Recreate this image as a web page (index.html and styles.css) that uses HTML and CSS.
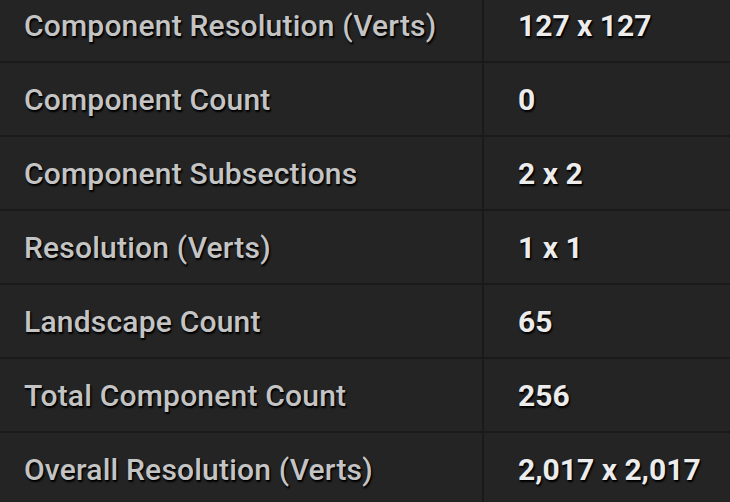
FILE: index.html
```html
<!DOCTYPE html>
<html>
<head>
<meta charset="utf-8">
<link rel="stylesheet" href="styles.css">
</head>
<body>
<div class="table">
  <div class="row"><div class="name">Component Resolution (Verts)</div><div class="value">127 x 127</div></div>
  <div class="row"><div class="name">Component Count</div><div class="value">0</div></div>
  <div class="row"><div class="name">Component Subsections</div><div class="value">2 x 2</div></div>
  <div class="row"><div class="name">Resolution (Verts)</div><div class="value">1 x 1</div></div>
  <div class="row"><div class="name">Landscape Count</div><div class="value">65</div></div>
  <div class="row"><div class="name">Total Component Count</div><div class="value">256</div></div>
  <div class="row"><div class="name">Overall Resolution (Verts)</div><div class="value">2,017 x 2,017</div></div>
</div>
</body>
</html>
```
FILE: styles.css
```css
html, body {
  margin: 0;
  padding: 0;
  background: #242424;
  overflow: hidden;
}
.table {
  margin-top: -11px;
  font-family: Roboto, "Liberation Sans", sans-serif;
  font-size: 30px;
}
.row {
  display: grid;
  grid-template-columns: 484px 1fr;
  height: 72px;
  border-bottom: 2px solid #1a1a1a;
}
.name, .value {
  display: flex;
  align-items: center;
  text-shadow: 1px 1px 1px #000, 1px 2px 2px #000;
}
.name {
  padding-left: 24px;
  color: #c4c4c4;
  font-weight: 500;
  letter-spacing: 0.2px;
  border-right: 2px solid #1a1a1a;
}
.value {
  padding-left: 34px;
  color: #ececec;
  font-weight: bold;
}
```
